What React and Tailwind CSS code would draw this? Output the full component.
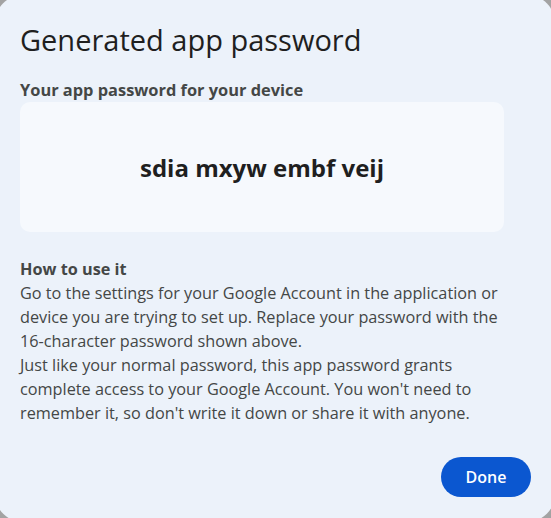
export default function App() {
  return (
    <div className="w-[551px] h-[518px] overflow-hidden bg-[#a3a3a3]">
      <div
        className="ml-[-5px] mt-[-5px] w-[560px] h-[527px] rounded-[28px] bg-[#ecf2fa] pl-[25px] pr-[24px] pt-[27px] flex flex-col"
        style={{ fontFamily: "'Open Sans', sans-serif" }}
      >
        <h1 className="text-[29px] leading-[36px] text-[#1f1f1f]">
          Generated app password
        </h1>
        <h2 className="mt-[20px] text-[16.4px] leading-[24px] font-bold text-[#444746]">
          Your app password for your device
        </h2>
        <div className="w-[484px] h-[130px] rounded-[10px] bg-[#f6f9fd] flex items-center justify-center">
          <span className="mt-[2px] text-[24px] font-bold text-[#1f1f1f]">
            sdia mxyw embf veij
          </span>
        </div>
        <div className="mt-[25px] w-[484px] text-[16.25px] leading-[24px] text-[#444746]">
          <p className="font-bold">How to use it</p>
          <p>
            Go to the settings for your Google Account in the application or device you are trying to set up. Replace your password with the <span className="whitespace-nowrap">16-character</span> password shown above.
          </p>
          <p>
            Just like your normal password, this app password grants complete access to your Google Account. You won't need to remember it, so don't write it down or share it with anyone.
          </p>
        </div>
        <div className="mt-[32px] flex justify-end">
          <button className="w-[90px] h-[40px] rounded-full bg-[#0b57d0] text-white text-[16px] font-semibold">
            Done
          </button>
        </div>
      </div>
    </div>
  );
}
